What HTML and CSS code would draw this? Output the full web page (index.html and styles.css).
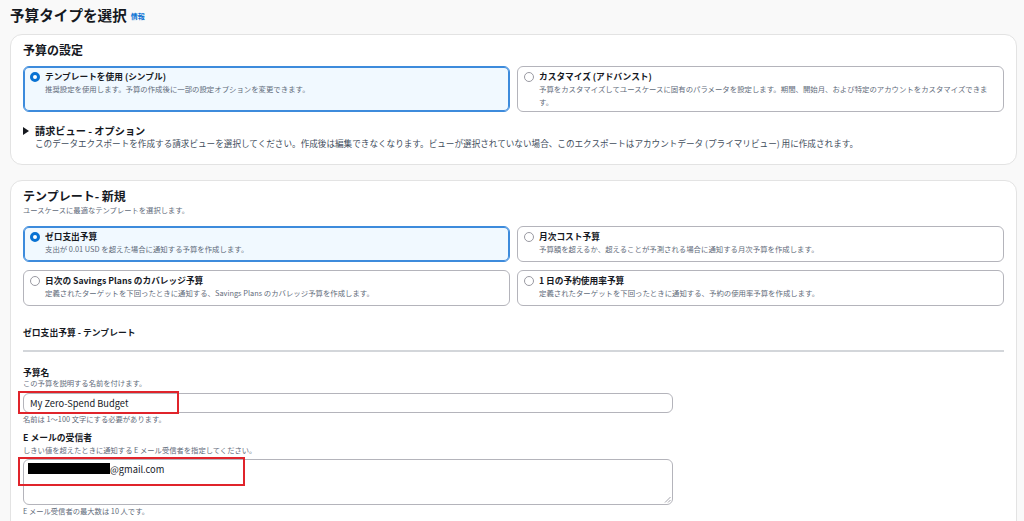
FILE: index.html
```html
<!DOCTYPE html>
<html lang="ja">
<head>
<meta charset="utf-8">
<title>予算タイプを選択</title>
<link rel="stylesheet" href="styles.css">
</head>
<body>
<main class="page">
  <header class="page-head">
    <h1 class="page-title">予算タイプを選択</h1>
    <a class="info-link">情報</a>
  </header>

  <section class="card card-settings">
    <h2 class="card-title">予算の設定</h2>
    <div class="tiles tiles-tall">
      <div class="tile selected">
        <span class="radio"></span>
        <span class="tile-title">テンプレートを使用 (シンプル)</span>
        <span class="tile-desc">推奨設定を使用します。予算の作成後に一部の設定オプションを変更できます。</span>
      </div>
      <div class="tile">
        <span class="radio"></span>
        <span class="tile-title">カスタマイズ (アドバンスト)</span>
        <span class="tile-desc">予算をカスタマイズしてユースケースに固有のパラメータを設定します。期間、開始月、および特定のアカウントをカスタマイズできます。</span>
      </div>
    </div>
    <div class="expander">
      <div class="exp-head">
        <svg class="caret" width="6" height="8" viewBox="0 0 6 8"><path d="M0 0 L6 4 L0 8 Z" fill="#16191f"/></svg>
        <span>請求ビュー - オプション</span>
      </div>
      <p class="exp-desc">このデータエクスポートを作成する請求ビューを選択してください。作成後は編集できなくなります。ビューが選択されていない場合、このエクスポートはアカウントデータ (プライマリビュー) 用に作成されます。</p>
    </div>
  </section>

  <section class="card card-template">
    <h2 class="card-title">テンプレート- 新規</h2>
    <p class="card-desc">ユースケースに最適なテンプレートを選択します。</p>
    <div class="tiles tiles-short">
      <div class="tile selected">
        <span class="radio"></span>
        <span class="tile-title">ゼロ支出予算</span>
        <span class="tile-desc">支出が 0.01 USD を超えた場合に通知する予算を作成します。</span>
      </div>
      <div class="tile">
        <span class="radio"></span>
        <span class="tile-title">月次コスト予算</span>
        <span class="tile-desc">予算額を超えるか、超えることが予測される場合に通知する月次予算を作成します。</span>
      </div>
      <div class="tile">
        <span class="radio"></span>
        <span class="tile-title">日次の Savings Plans のカバレッジ予算</span>
        <span class="tile-desc">定義されたターゲットを下回ったときに通知する、Savings Plans のカバレッジ予算を作成します。</span>
      </div>
      <div class="tile">
        <span class="radio"></span>
        <span class="tile-title">1 日の予約使用率予算</span>
        <span class="tile-desc">定義されたターゲットを下回ったときに通知する、予約の使用率予算を作成します。</span>
      </div>
    </div>

    <h3 class="sub-title">ゼロ支出予算 - テンプレート</h3>
    <div class="divider"></div>

    <div class="field">
      <div class="field-label">予算名</div>
      <div class="field-desc">この予算を説明する名前を付けます。</div>
      <div class="control input">
        <span class="input-text">My Zero-Spend Budget</span>
        <span class="annot annot-name"></span>
      </div>
      <div class="field-hint">名前は 1～100 文字にする必要があります。</div>
    </div>

    <div class="field field-email">
      <div class="field-label">E メールの受信者</div>
      <div class="field-desc">しきい値を超えたときに通知する E メール受信者を指定してください。</div>
      <div class="control textarea">
        <span class="textarea-line"><span class="redact"></span><span class="input-text">@gmail.com</span></span>
        <svg class="resize" width="7" height="7" viewBox="0 0 7 7"><path d="M6.5 1 L1 6.5 M6.5 4 L4 6.5" stroke="#8c8c94" stroke-width="0.8" fill="none"/></svg>
        <span class="annot annot-email"></span>
      </div>
      <div class="field-hint">E メール受信者の最大数は 10 人です。</div>
    </div>
  </section>
</main>
</body>
</html>
```

FILE: styles.css
```css
html, body {
  margin: 0;
  padding: 0;
  overflow: hidden;
}

body {
  background: #f9f9f9;
  font-family: "Noto Sans CJK JP", "Noto Sans", sans-serif;
  color: #16191f;
}

.page {
  padding: 0 7px 0 10px;
}

.page-head {
  display: flex;
  align-items: center;
  gap: 4px;
  height: 22px;
  padding-top: 4px;
  margin-bottom: 8px;
}

.page-title {
  margin: 0;
  font-size: 14.6px;
  line-height: 22px;
  font-weight: 700;
}

.info-link {
  font-size: 7px;
  font-weight: 700;
  color: #0972d3;
  margin-top: 2px;
}

.card {
  background: #fff;
  border: 1px solid #e3e3e3;
  border-radius: 12px;
  padding: 6px 12px 15px 12px;
}

.card-template {
  margin-top: 15px;
  padding-bottom: 40px;
}

.card-title {
  margin: 0;
  font-size: 12px;
  line-height: 18px;
  font-weight: 700;
}

.card-settings .card-title {
  margin-bottom: 7px;
}

.card-desc {
  margin: 0 0 10px;
  font-size: 7.3px;
  line-height: 11px;
  color: #5f6b7a;
}

.tiles {
  display: grid;
  grid-template-columns: 1fr 1fr;
  column-gap: 7px;
  row-gap: 8px;
}

.tiles-tall .tile {
  height: 46px;
}

.tiles-short .tile {
  height: 36px;
}

.tile {
  box-sizing: border-box;
  display: grid;
  grid-template-columns: 10px 1fr;
  grid-template-rows: 12px auto;
  column-gap: 5px;
  align-content: start;
  padding: 4px 6px 0 6px;
  border: 1px solid #b4b4bb;
  border-radius: 6px;
  background: #fff;
}

.tile.selected {
  border-color: #3d8bdc;
  box-shadow: inset 0 0 0 1px #3d8bdc;
  background: #f1f9ff;
}

.radio {
  grid-column: 1;
  grid-row: 1;
  align-self: center;
  box-sizing: border-box;
  width: 10px;
  height: 10px;
  border-radius: 50%;
  border: 1px solid #9a9aa2;
  background: #fff;
}

.tile.selected .radio {
  border: 3px solid #0972d3;
}

.tile-title {
  grid-column: 2;
  grid-row: 1;
  font-size: 8.7px;
  line-height: 12px;
  font-weight: 700;
  white-space: nowrap;
}

.tile-desc {
  grid-column: 2;
  grid-row: 2;
  margin-top: -1px;
  font-size: 7.4px;
  line-height: 13px;
  color: #5f6b7a;
}

.expander {
  margin-top: 12px;
}

.exp-head {
  display: flex;
  align-items: center;
  gap: 6px;
  font-size: 10.2px;
  line-height: 14px;
  font-weight: 700;
}

.caret {
  flex: none;
}

.exp-desc {
  margin: 0 0 0 12px;
  font-size: 8.6px;
  line-height: 11px;
  color: #414d5c;
  white-space: nowrap;
}

.sub-title {
  margin: 20px 0 0;
  font-size: 8.8px;
  line-height: 14px;
  font-weight: 700;
}

.divider {
  margin-top: 10px;
  height: 2px;
  background: #d3d6da;
}

.field {
  margin-top: 15px;
}

.field-email {
  margin-top: 8px;
}

.field-label {
  font-size: 8.8px;
  line-height: 12px;
  font-weight: 700;
}

.field-desc {
  font-size: 7.3px;
  line-height: 9px;
  color: #5f6b7a;
}

.field-email .field-desc {
  margin-top: 1px;
  line-height: 10px;
}

.field-hint {
  margin-top: 1px;
  font-size: 7.3px;
  line-height: 10px;
  color: #5f6b7a;
}

.control {
  position: relative;
  box-sizing: border-box;
  width: 650px;
  border: 1px solid #b4b4bb;
  border-radius: 6px;
  background: #fff;
}

.input {
  display: flex;
  align-items: center;
  height: 20px;
  margin-top: 5px;
  padding-left: 6px;
}

.textarea {
  height: 46px;
  margin-top: 4px;
  padding: 2px 4px;
}

.textarea-line {
  display: flex;
  align-items: center;
  height: 13px;
}

.redact {
  display: inline-block;
  width: 82px;
  height: 11px;
  background: #000;
}

.input-text {
  font-size: 9.3px;
  color: #16191f;
}

.resize {
  position: absolute;
  right: 1px;
  bottom: 1px;
}

.annot {
  position: absolute;
  box-sizing: border-box;
  border: 2px solid #e0242b;
  left: -6px;
  top: -3px;
}

.annot-name {
  width: 161px;
  height: 23px;
}

.annot-email {
  width: 227px;
  height: 29px;
}
```
